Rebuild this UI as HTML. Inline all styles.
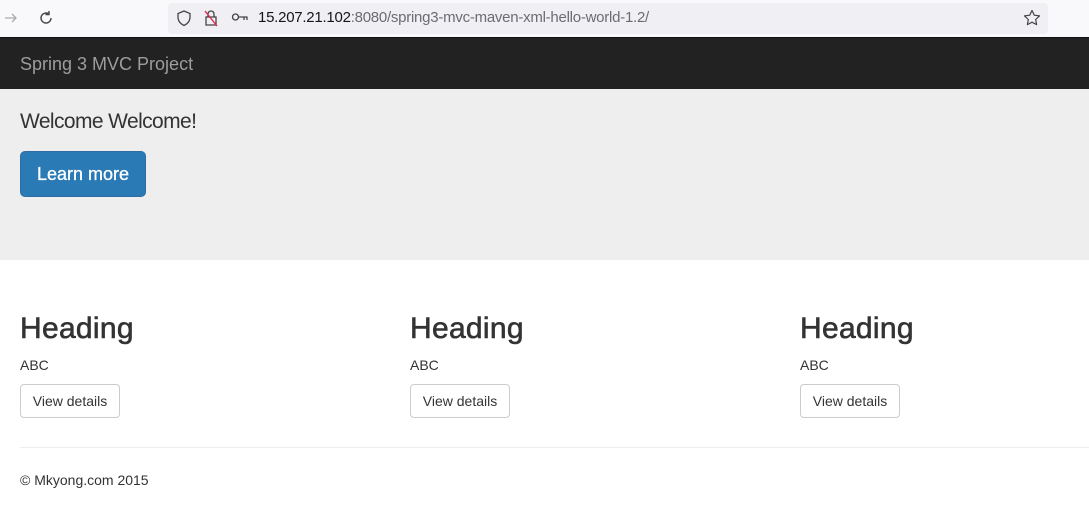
<!DOCTYPE html>
<html><head><style>
*{margin:0;padding:0;box-sizing:border-box}
body{width:1089px;height:531px;overflow:hidden;background:#fff;font-family:"Liberation Sans",Helvetica,Arial,sans-serif;color:#333;position:relative}
.top{position:absolute;left:0;top:0;width:1089px;height:37px;background:#f9f9fb}
.url{position:absolute;left:168px;top:3px;width:880px;height:31px;background:#f0f0f4;border-radius:4px}
.nav{position:absolute;top:37px;left:0;width:1089px;height:52px;background:#222;border-top:1px solid #111}
.nav span{position:absolute;left:20px;top:16px;font-size:18px;color:#9d9d9d}
.jumbo{position:absolute;top:89px;left:0;width:1089px;height:171px;background:#eee}
.jumbo h1{position:absolute;left:20px;top:21px;font-size:21px;font-weight:300;color:#333;letter-spacing:-0.6px}
.btn{position:absolute;left:20px;top:62px;width:126px;height:46px;background:#2a7ab6;border:1px solid #2e6da4;border-radius:5px;color:#fff;font-size:18px;line-height:44px;text-align:center;-webkit-text-stroke:0.3px #fff}
.col{position:absolute;top:311px}
.col h2{font-size:30px;font-weight:500;line-height:36px;color:#333;-webkit-text-stroke:0.6px #333;letter-spacing:0.3px}
.col p{font-size:14px;margin-top:10px}
.col .b{margin-top:11px;width:100px;height:34px;border:1px solid #ccc;border-radius:4px;font-size:14px;line-height:32px;text-align:center}
hr{position:absolute;top:447px;left:20px;width:1069px;border:0;border-top:1px solid #eee}
.foot{position:absolute;top:472px;left:20px;font-size:14px}
</style></head><body>
<div class="top">
<svg style="position:absolute;left:3px;top:10px" width="16" height="16"><path d="M2 8h11M9 4l4 4-4 4" stroke="#aaa" stroke-width="1.3" fill="none"/></svg>
<svg style="position:absolute;left:38px;top:10px" width="16" height="16"><path d="M13 8a5 5 0 1 1-2-4M11 1v3.5h-3.5" stroke="#444" stroke-width="1.4" fill="none"/></svg>
<div class="url"></div>
<svg style="position:absolute;left:176px;top:10px" width="16" height="17"><path d="M8 1l6 2.5v4c0 4-3 6.5-6 8-3-1.5-6-4-6-8v-4z" stroke="#444" stroke-width="1.3" fill="none"/></svg>
<svg style="position:absolute;left:203px;top:9px" width="16" height="18"><path d="M5 8V5a3 3 0 0 1 6 0v3M3 8h10v8H3z" stroke="#444" stroke-width="1.3" fill="none"/><path d="M2 2l12 15" stroke="#e22850" stroke-width="1.4"/></svg>
<svg style="position:absolute;left:231px;top:11px" width="18" height="12"><circle cx="4.5" cy="6" r="3" stroke="#444" stroke-width="1.3" fill="none"/><path d="M7.5 6h9M13 6v3M16 6v3" stroke="#444" stroke-width="1.3"/></svg>
<div style="position:absolute;left:258px;top:9px;font-size:15px;color:#15141a;letter-spacing:-0.25px">15.207.21.102<span style="color:#6b6b72">:8080/spring3-mvc-maven-xml-hello-world-1.2/</span></div>
<svg style="position:absolute;left:1023px;top:9px" width="18" height="18"><path d="M9 1.5l2.3 4.7 5.2.7-3.8 3.6.9 5.1L9 13.2l-4.6 2.4.9-5.1L1.5 6.9l5.2-.7z" stroke="#444" stroke-width="1.2" fill="none" stroke-linejoin="round"/></svg>
</div>
<div class="nav"><span>Spring 3 MVC Project</span></div>
<div class="jumbo"><h1>Welcome Welcome!</h1><div class="btn">Learn more</div></div>
<div class="col" style="left:20px"><h2>Heading</h2><p>ABC</p><div class="b">View details</div></div>
<div class="col" style="left:410px"><h2>Heading</h2><p>ABC</p><div class="b">View details</div></div>
<div class="col" style="left:800px"><h2>Heading</h2><p>ABC</p><div class="b">View details</div></div>
<hr>
<div class="foot">© Mkyong.com 2015</div>
</body></html>
